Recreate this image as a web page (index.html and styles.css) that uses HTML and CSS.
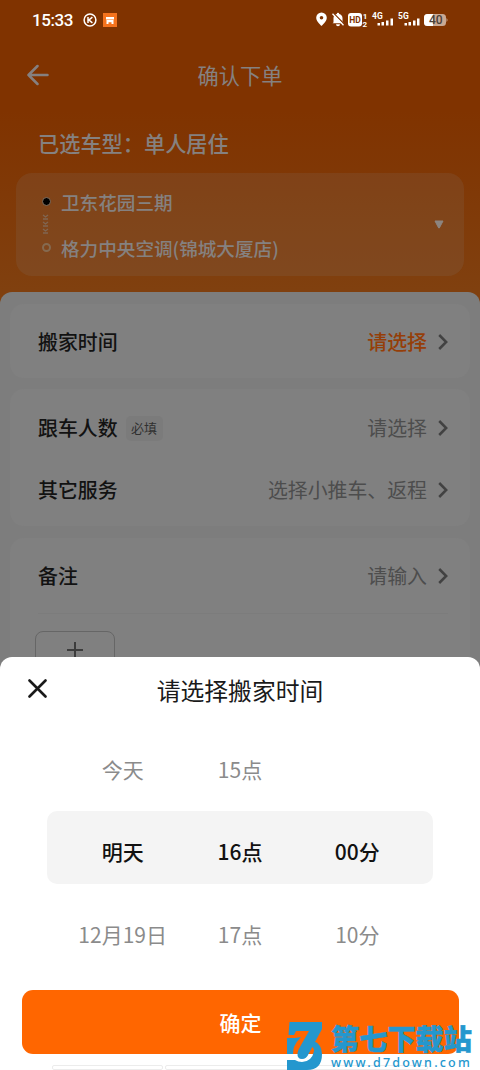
FILE: index.html
```html
<!DOCTYPE html>
<html lang="zh-CN">
<head>
<meta charset="utf-8">
<title>确认下单</title>
<link rel="stylesheet" href="styles.css">
</head>
<body>
<div class="phone">
  <header class="hero">
    <div class="status">
      <span class="clock">15:33</span>
      <svg class="s-k" width="14" height="14" viewBox="0 0 14 14" fill="none" stroke="#fff" stroke-width="1.500"><circle cx="7" cy="7" r="5.900"/><path d="M5 4v6M9.400 4.200 6 7l3.400 2.900"/></svg>
      <svg class="s-app" width="14" height="14" viewBox="0 0 14 14"><path fill="#f5731d" d="M0 0h14v14H0z"/><path fill="#fff" d="M3 4h8v2.400H3zM3.500 7h7v1h-7zM3.500 8h2v3h-2zM8.500 8h2v3h-2zM5.500 8h3v1.200h-3z"/></svg>
      <span class="spacer"></span>
      <svg class="s-right" width="134" height="20" viewBox="0 0 134 20">
        <path fill="#fff" fill-rule="evenodd" d="M7.500 2.500A5.300 5.300 0 0 0 2.200 7.800c0 3.800 5.300 8.200 5.300 8.200s5.300-4.400 5.300-8.200a5.300 5.300 0 0 0-5.300-5.300zm0 3.500a1.800 1.800 0 1 1 0 3.600 1.800 1.800 0 0 1 0-3.600z"/>
        <path fill="#fff" d="M19.500 12.500V8a4.400 4.400 0 0 1 3.300-4 1.200 1.200 0 0 1 2.400 0 4.400 4.400 0 0 1 3.300 4v3l1 2.300H18.500zM22 14.200h4a2 2 0 0 1-4 0z"/>
        <path stroke="#803300" stroke-width="1.300" d="m19.500 3.200 11 11"/><path stroke="#fff" stroke-width="1.300" d="m18.500 3.700 11 11.500"/>
        <rect x="34" y="3" width="14" height="13.500" rx="3" fill="#fff"/>
        <text x="35.300" y="13" class="svg-hd">HD</text>
        <text x="48.700" y="9" class="svg-tiny">1</text><text x="48.500" y="16.500" class="svg-tiny">2</text>
        <text x="58" y="9" class="svg-net">4G</text><text x="84" y="9" class="svg-net">5G</text>
        <path fill="#fff" d="M63.500 13h2.500v2.500h-2.500zM67.500 12h2.500v3.500h-2.500zM72 10.500h2.500v5H72zM76.500 8.500H79v7h-2.500zM90.500 13H93v2.500h-2.500zM94.500 12H97v3.500h-2.500zM99 10.500h2.500v5H99zM103 8.500h2.500v7H103z"/>
        <rect x="110" y="4" width="22" height="12" rx="3.500" fill="#c9a994"/><path fill="#fff" d="M113.500 4H119v12h-5.500a3.500 3.500 0 0 1-3.500-3.500v-5A3.500 3.500 0 0 1 113.500 4z"/><path fill="#c9a994" d="M132.500 8q2 2 0 4z"/>
        <text x="115" y="14.300" class="svg-batt">40</text>
      </svg>
    </div>
    <div class="nav">
      <svg class="back" width="22" height="22" viewBox="0 0 22 22" fill="none" stroke="#858080" stroke-width="2.500" stroke-linecap="round" stroke-linejoin="round"><path d="M20.500 11h-19M10.500 2l-9 9 9 9"/></svg>
      <h1 class="page-title">确认下单</h1>
    </div>
    <div class="vehicle">已选车型：单人居住</div>
    <div class="route">
      <div class="stops">
        <div class="stop"><i class="dot"></i>卫东花园三期</div>
        <div class="between"><svg width="7" height="22" viewBox="0 0 7 22" fill="none" stroke="#806652" stroke-width="1.300"><path d="m1 1 2.500 2L6 1M1 5h5M1 8l2.500 2L6 8M1 12h5M1 15l2.500 2L6 15M1 19h5"/></svg></div>
        <div class="stop"><i class="dot ring"></i>格力中央空调(锦城大厦店)</div>
      </div>
      <svg class="caret" width="10" height="9" viewBox="0 0 10 9"><path fill="#8c8580" stroke="#8c8580" stroke-linejoin="round" d="M1 1h8L5.300 8h-.6z"/></svg>
    </div>
  </header>

  <main class="form">
    <section class="card card-time">
      <div class="row"><span class="label">搬家时间</span><span class="value accent">请选择</span><svg class="chev" viewBox="0 0 10 16"><path d="m1.200 1 7 7-7 7"/></svg></div>
    </section>
    <section class="card card-extra">
      <div class="row"><span class="label">跟车人数</span><span class="tag">必填</span><span class="value">请选择</span><svg class="chev" viewBox="0 0 10 16"><path d="m1.200 1 7 7-7 7"/></svg></div>
      <div class="row"><span class="label">其它服务</span><span class="value">选择小推车、返程</span><svg class="chev" viewBox="0 0 10 16"><path d="m1.200 1 7 7-7 7"/></svg></div>
    </section>
    <section class="card card-note">
      <div class="row note-row"><span class="label">备注</span><span class="value">请输入</span><svg class="chev" viewBox="0 0 10 16"><path d="m1.200 1 7 7-7 7"/></svg></div>
      <div class="upload"><svg width="16" height="16" viewBox="0 0 16 16" stroke="#3c3c3c" stroke-width="2"><path d="M8 0v16M0 8h16"/></svg></div>
    </section>
  </main>

  <div class="sheet">
    <div class="sheet-head">
      <svg class="close" width="19" height="19" viewBox="0 0 19 19" fill="none" stroke="#1a1a1a" stroke-width="2.600" stroke-linecap="round"><path d="m1.500 1.500 16 16M17.500 1.500l-16 16"/></svg>
      <h2 class="sheet-title">请选择搬家时间</h2>
    </div>
    <div class="picker">
      <div class="pick"><span>今天</span><span>15点</span><span></span></div>
      <div class="pick selected"><span>明天</span><span>16点</span><span>00分</span></div>
      <div class="pick"><span>12月19日</span><span>17点</span><span>10分</span></div>
    </div>
    <button class="confirm">确定</button>
    <div class="edge"><i></i><i></i></div>
  </div>

  <div class="mark">
    <svg class="mark-logo" width="36" height="48" viewBox="0 0 36 48" fill="#2497ce">
      <path d="M2.500 0H35v7L21.500 32q-2 5-6.500 5-5 0-4.500-6 .5-3 3-7L22 9H9l-2 4H1.500z"/>
      <path d="M0 16h8l6-1q-5 5-7 10-1 3-1 7H0z"/>
      <path d="M25.500 18.500Q35 22 35 32 35 48 20 48H0V38h8q3 2 7 2 10-.5 12-11 .5-3-4-6z"/>
    </svg>
    <div class="mark-text"><div class="mark-name">第七下载站</div><div class="mark-url">www.d7down.com</div></div>
  </div>
</div>
</body>
</html>
```

FILE: styles.css
```css
* { box-sizing: border-box; }
body { margin: 0; font-family: "Noto Sans CJK SC", sans-serif; }
.phone { position: relative; width: 480px; height: 1070px; overflow: hidden; background: #7c7c7c; }
h1, h2 { margin: 0; font-weight: 400; }

.hero { height: 306px; background: linear-gradient(#803300 0, #803300 110px, #80400f 290px); color: #858180; }
.status { display: flex; align-items: center; height: 40px; padding: 0 32px; color: #fff; }
.clock { font: 500 17px/20px Roboto, sans-serif; width: 42px; white-space: nowrap; letter-spacing: -.4px; }
.s-k { margin-left: 9px; }
.s-app { margin-left: 6px; }
.spacer { flex: 1; }
.svg-hd { font: 700 8.5px Roboto, sans-serif; fill: #803300; }
.svg-tiny { font: 700 8px Roboto, sans-serif; fill: #fff; }
.svg-net { font: 700 8.5px Roboto, sans-serif; fill: #fff; }
.svg-batt { font: 500 12px Roboto, sans-serif; fill: #4b4038; }

.nav { display: grid; grid-template-columns: 60px 1fr 60px; align-items: center; height: 70px; }
.back { margin-left: 27px; }
.page-title { text-align: center; font-size: 21.2px; line-height: 30px; }
.vehicle { margin-left: 38px; padding-top: 17px; height: 63px; font-size: 21.2px; line-height: 31px; font-weight: 500; white-space: nowrap; }
.route { display: flex; align-items: center; justify-content: space-between; margin: 0 16px; height: 103px; padding: 0 20px 0 26px; border-radius: 16px; background: rgba(128, 128, 128, .15); }
.stop { display: flex; align-items: center; height: 28px; font-size: 18.6px; font-weight: 500; white-space: nowrap; }
.dot { width: 9px; height: 9px; margin-right: 10px; border: 1px solid #85705e; border-radius: 50%; background: #000; }
.ring { border: 2px solid #856a50; background: transparent; }
.between { display: flex; align-items: center; height: 18px; }

.form { position: relative; margin-top: -14px; padding: 12px 10px; border-radius: 12px 12px 0 0; background: #7d7d7d; height: 778px; }
.card { padding: 0 22px 0 28px; border-radius: 14px; background: #808080; }
.card-time { height: 74px; margin-bottom: 11px; }
.card-extra { height: 137px; padding-top: 8px; margin-bottom: 12px; }
.card-note { height: 200px; padding-top: 1px; }
.row { display: flex; align-items: center; height: 62px; font-size: 19.9px; line-height: 30px; }
.card-time .row { height: 74px; padding-top: 1px; }
.note-row { height: 75px; border-bottom: 1px solid #7c7c7c; }
.label { color: #121212; font-weight: 500; }
.tag { margin-left: 8px; width: 37px; height: 25px; border-radius: 5px; background: #7b7b7b; color: #303030; font-size: 13px; line-height: 24px; text-align: center; }
.value { margin-left: auto; color: #4d4d4d; white-space: nowrap; }
.accent { color: #953e08; font-weight: 500; }
.chev { width: 10px; height: 16px; margin-left: 11px; fill: none; stroke: #424242; stroke-width: 2.5; }
.upload { width: 80px; height: 80px; margin: 17px 0 0 -3px; padding-top: 10px; border: 1px solid #666; border-radius: 8px; text-align: center; line-height: 0; }

.sheet { position: absolute; left: 0; right: 0; top: 657px; height: 413px; border-radius: 12px 12px 0 0; background: #fff; }
.sheet-head { display: grid; grid-template-columns: 60px 1fr 60px; align-items: center; height: 66px; }
.close { margin-left: 28px; margin-top: -3px; }
.sheet-title { text-align: center; font-size: 23.8px; line-height: 34px; color: #1a1a1a; }
.picker { display: grid; grid-template-rows: 73px 73px 73px; row-gap: 9px; padding: 6px 47px 0; }
.pick { display: grid; grid-template-columns: repeat(3, 1fr); align-items: center; padding: 7px 17px 0; text-align: center; font-size: 21px; line-height: 30px; color: #8b8b8b; }
.pick.selected { padding-top: 6px; border-radius: 10px; background: #f4f4f4; color: #111; font-weight: 500; }
.pick:last-child { padding-top: 8px; }
.confirm { display: block; width: 437px; height: 64px; margin: 24px 0 0 22px; padding: 0; border: 0; border-radius: 11px; background: #f60; color: #fff; font: 500 21px/64px "Noto Sans CJK SC", sans-serif; }
.edge { display: flex; gap: 2px; margin: 11px 52px 0; }
.edge i { width: 111px; height: 5px; border: 1px solid #ececec; border-radius: 2px; }
.edge i + i { flex: 1; }

.mark { position: absolute; left: 287px; top: 1022px; display: flex; gap: 8px; color: #2497ce; }
.mark-text { display: grid; grid-template-rows: 34px 14px; width: 145px; white-space: nowrap; }
.mark-name { font-size: 28.2px; line-height: 32px; font-weight: 900; -webkit-text-stroke: .5px #2497ce; }
.mark-url { font: 500 12.5px/14px "Noto Sans", sans-serif; letter-spacing: 2.2px; }
```
